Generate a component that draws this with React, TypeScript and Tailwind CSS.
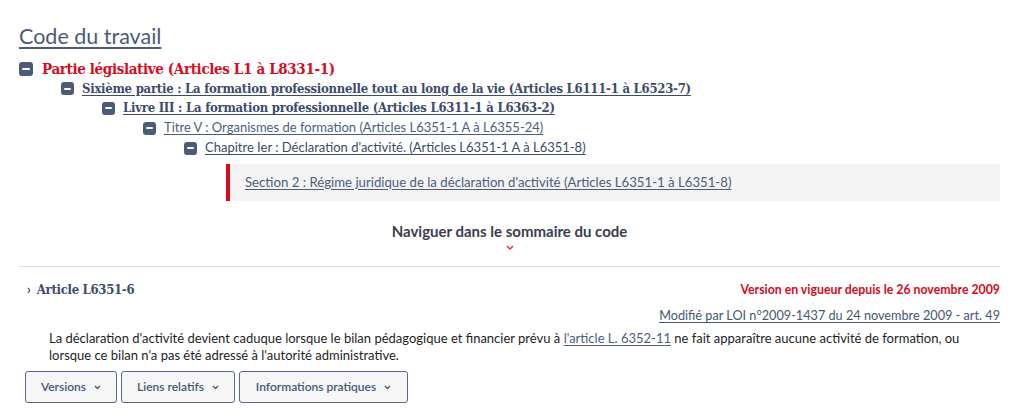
import React from "react";

const sans = { fontFamily: "Lato, 'Liberation Sans', sans-serif" };
const slab = { fontFamily: "'DejaVu Serif Condensed', 'DejaVu Serif', serif" };

function Minus({ size = 13 }: { size?: number }) {
  return (
    <span
      className="inline-flex items-center justify-center rounded-[3px] bg-[#4d5b7b] shrink-0"
      style={{ width: size, height: size }}
    >
      <span className="block h-[2px] bg-white rounded-[1px]" style={{ width: size - 6 }} />
    </span>
  );
}

function Chevron() {
  return (
    <svg width="7" height="5" viewBox="0 0 7 5" className="ml-2">
      <path d="M1 1l2.5 2.5L6 1" fill="none" stroke="#4a5878" strokeWidth="1.4" />
    </svg>
  );
}

export default function App() {
  return (
    <div className="w-[1024px] h-[415px] bg-white overflow-hidden" style={sans}>
      <div className="pl-[19px] pr-[24px] pt-[21px]">
        <h1 className="text-[21.5px] leading-[30px] text-[#4a5a78] underline underline-offset-[3px] decoration-[1.5px] w-fit font-normal">
          Code du travail
        </h1>

        <div className="mt-[8px] flex items-center gap-[9px] h-[20px]">
          <Minus size={14} />
          <span className="text-[15px] tracking-[-0.35px] text-[#d80a1c] font-semibold" style={slab}>
            Partie législative (Articles L1 à L8331-1)
          </span>
        </div>
        <div className="ml-[42px] flex items-center gap-[8px] h-[19px]">
          <Minus />
          <span className="text-[13px] tracking-[-0.25px] text-[#3c4a6b] font-semibold underline underline-offset-2" style={slab}>
            Sixième partie : La formation professionnelle tout au long de la vie (Articles L6111-1 à L6523-7)
          </span>
        </div>
        <div className="ml-[83px] flex items-center gap-[8px] h-[20px]">
          <Minus />
          <span className="text-[13px] tracking-[-0.25px] text-[#3c4a6b] font-semibold underline underline-offset-2" style={slab}>
            Livre III : La formation professionnelle (Articles L6311-1 à L6363-2)
          </span>
        </div>
        <div className="ml-[124px] flex items-center gap-[8px] h-[20px]">
          <Minus />
          <span className="text-[13px] text-[#4d5d7e] underline underline-offset-2">
            Titre V : Organismes de formation (Articles L6351-1 A à L6355-24)
          </span>
        </div>
        <div className="ml-[165px] flex items-center gap-[8px] h-[20px]">
          <Minus />
          <span className="text-[13px] text-[#3c4a6b] underline underline-offset-2">
            Chapitre Ier : Déclaration d'activité. (Articles L6351-1 A à L6351-8)
          </span>
        </div>
        <div className="ml-[207px] mt-[6px] h-[37px] bg-[#f3f3f3] border-l-[4px] border-[#d80a1c] flex items-center pl-[15px]">
          <span className="text-[13.2px] text-[#4d5d7e] underline underline-offset-2">
            Section 2 : Régime juridique de la déclaration d'activité (Articles L6351-1 à L6351-8)
          </span>
        </div>

        <div className="flex flex-col items-center mt-[21px]">
          <span className="text-[15px] font-bold text-[#3a3d4e] leading-[18px]">Naviguer dans le sommaire du code</span>
          <svg width="8" height="5" viewBox="0 0 8 5" className="mt-[5px]">
            <path d="M1 1l3 3 3-3" fill="none" stroke="#e8203a" strokeWidth="1.3" />
          </svg>
        </div>

        <div className="mt-[16px] h-px bg-[#dddddd] w-[981px]" />

        <div className="w-[981px] flex items-center justify-between mt-[14px] h-[18px]">
          <div className="flex items-center gap-[6px] pl-[8px]">
            <span className="text-[13px] text-[#3c4a6b] font-bold">›</span>
            <span className="text-[13px] tracking-[-0.3px] text-[#3c4a6b] font-semibold" style={slab}>Article L6351-6</span>
          </div>
          <span className="text-[12.3px] font-bold text-[#d80a1c]">Version en vigueur depuis le 26 novembre 2009</span>
        </div>
        <div className="w-[981px] flex justify-end mt-[7px]">
          <span className="text-[12.7px] text-[#465673] underline underline-offset-2">
            Modifié par LOI n°2009-1437 du 24 novembre 2009 - art. 49
          </span>
        </div>
        <p className="ml-[30px] mt-[5px] w-[930px] text-[13px] leading-[17px] text-[#1e1e1e]">
          La déclaration d'activité devient caduque lorsque le bilan pédagogique et financier prévu à{" "}
          <span className="underline underline-offset-2 text-[#4d5d7e]">l'article L. 6352-11</span> ne fait apparaître aucune activité de formation, ou lorsque ce bilan n'a pas été adressé à l'autorité administrative.
        </p>
        <div className="flex gap-[4px] ml-[6px] mt-[7px]">
          {[
            ["Versions", "w-[92px]"],
            ["Liens relatifs", "w-[114px]"],
            ["Informations pratiques", "w-[169px]"],
          ].map(([label, w]) => (
            <div
              key={label}
              className={`${w} h-[32px] border border-[#5a6784] rounded-[3px] bg-[#f6f6f6] flex items-center justify-center text-[12px] font-semibold text-[#4a5878]`}
            >
              {label}
              <Chevron />
            </div>
          ))}
        </div>
      </div>
    </div>
  );
}
